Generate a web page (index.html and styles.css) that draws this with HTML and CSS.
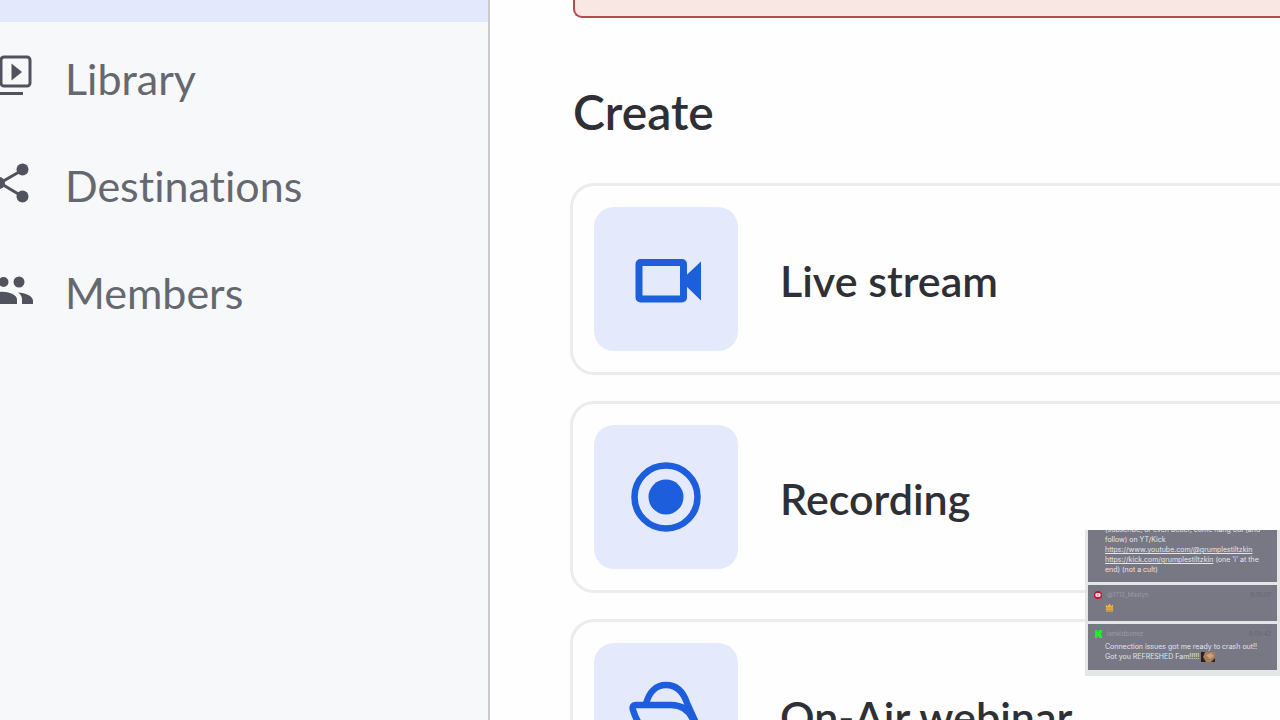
FILE: index.html
```
<!DOCTYPE html>
<html lang="en">
<head>
    <meta charset="UTF-8">
    <meta name="viewport" content="width=device-width, initial-scale=1.0">
    <title>Create</title>
    <link rel="stylesheet" href="styles.css">
</head>
<body>
    <aside class="sidebar">
        <div class="active-item"></div>
        <nav>
            <a href="#library">
                <svg class="nav-icon" viewBox="0 0 36 44" fill="none">
                    <rect x="1" y="3" width="29" height="29" rx="3" stroke="#50525d" stroke-width="3"/>
                    <path d="M11.500 9.500v17l10.500-8.500z" fill="#50525d"/>
                    <path d="M0 39.500h23" stroke="#50525d" stroke-width="3"/>
                </svg>
                <span>Library</span>
            </a>
            <a href="#destinations">
                <svg class="nav-icon" viewBox="0 0 36 44" fill="#50525d">
                    <path d="M22.500 9L0 22l22.500 13.500" fill="none" stroke="#50525d" stroke-width="3"/>
                    <circle cx="22.500" cy="8.500" r="6"/>
                    <circle cx="22.500" cy="35.500" r="6"/>
                    <circle cx="-1" cy="22" r="6"/>
                </svg>
                <span>Destinations</span>
            </a>
            <a href="#members">
                <svg class="nav-icon" viewBox="0 0 36 44" fill="#50525d">
                    <circle cx="3.500" cy="14" r="5"/>
                    <circle cx="19" cy="14" r="5.500"/>
                    <path d="M-4 25C2 22 17 25 17 31.500V36H-4z"/>
                    <path d="M18 24.500c7 .5 15 3.500 15 8V36H22v-4.500c0-3-1.500-5.500-4-7z"/>
                </svg>
                <span>Members</span>
            </a>
        </nav>
    </aside>

    <main class="content">
        <div class="alert"></div>
        <h1>Create</h1>
        <div class="cards">
            <button class="card">
                <svg class="card-icon" viewBox="0 0 144 144">
                    <rect x="45" y="55.500" width="44.500" height="36.500" rx="1.500" fill="none" stroke="#1c5edc" stroke-width="7"/>
                    <path d="M91 69.500L107 54.500v39L91 78z" fill="#1c5edc"/>
                </svg>
                <span>Live stream</span>
            </button>
            <button class="card">
                <svg class="card-icon" viewBox="0 0 144 144">
                    <circle cx="72" cy="72" r="31.500" fill="none" stroke="#1c5edc" stroke-width="6.500"/>
                    <circle cx="72" cy="72" r="17.500" fill="#1c5edc"/>
                </svg>
                <span>Recording</span>
            </button>
            <button class="card">
                <svg class="card-icon" viewBox="0 0 144 144" fill="none" stroke="#1c5edc" stroke-width="6.500">
                    <path d="M52 61C55 49 62 42 72 42s17 6 21 18l9 20 4 12"/>
                    <path d="M100 79C96 68 88 62 77 62H42c-3 0-4 2-3 5 4 13 12 24 24 32"/>
                </svg>
                <span>On-Air webinar</span>
            </button>
        </div>
    </main>

    <!-- live chat overlay -->
    <section class="chat">
        <div class="message message-first">
            <p>(subscribe, or even better, come hang out (and<br>
            follow) on YT/Kick<br>
            <a href="https://www.youtube.com/@grumplestiltzkin">https://www.youtube.com/@grumplestiltzkin</a><br>
            <a href="https://kick.com/grumplestiltzkin">https://kick.com/grumplestiltzkin</a> (one 'i' at the<br>
            end) (not a cult)</p>
        </div>
        <div class="message">
            <div class="meta">
                <svg viewBox="0 0 8 8"><circle cx="4" cy="4" r="4" fill="#c4122f"/><rect x="1.500" y="2.200" width="5" height="3.600" rx="1" fill="#fff"/><path d="M3.500 3v2l1.500-1z" fill="#c4122f"/></svg>
                <span class="name">@1713_Maxlyn</span>
                <time>8:10:07</time>
            </div>
            <p>
                <svg class="emote" viewBox="0 0 10 10"><path d="M1 1l2 2 2-3 2 3 2-2v8H1z" fill="#f4b548"/><path d="M1 5h8M1 7.500h8" stroke="#a8692c" stroke-width=".7"/></svg>
            </p>
        </div>
        <div class="message message-last">
            <div class="meta">
                <svg viewBox="0 0 8 8"><path d="M1 0h2.500v2h1V1H5V0h3v3H7v2h1v3H5V7H4.500V6h-1v2H1z" fill="#20f020"/></svg>
                <span class="name">iamkidbonez</span>
                <time>8:09:42</time>
            </div>
            <p>Connection issues got me ready to crash out!!<br>
            Got you REFRESHED Fam!!!!!
            <svg class="photo" viewBox="0 0 14 10"><rect width="14" height="10" fill="#a77c5c"/><path d="M0 0h4L2 5l3 5H0z" fill="#2b201c"/><path d="M10 10l4-4v4z" fill="#33241c"/><path d="M5 3l5-2 3 3-4 3z" fill="#c9a27c"/></svg></p>
        </div>
    </section>
</body>
</html>
```
FILE: styles.css
```
* {
    margin: 0;
    padding: 0;
    box-sizing: border-box;
}
body {
    display: flex;
    min-height: 100vh;
    overflow: hidden;
    background: #fefefe;
    font-family: Lato, sans-serif;
    font-variant-ligatures: none;
}
.sidebar {
    flex: 0 0 490px;
    background: #f6f8fa;
    border-right: 2px solid #c9cbce;
}
.active-item {
    height: 22px;
    background: #e4e8fc;
}
nav {
    display: flex;
    flex-direction: column;
    gap: 47px;
    padding-top: 26px;
}
nav a {
    display: flex;
    align-items: center;
    gap: 29px;
    height: 60px;
    color: #666870;
    font-size: 43px;
    text-decoration: none;
}
.nav-icon {
    width: 36px;
    height: 44px;
    margin-bottom: 4px;
}
.content {
    flex: 1;
    height: 100vh;
    padding-left: 80px;
    overflow: hidden;
}
.alert {
    height: 18px;
    margin-left: 3px;
    background: #f9e7e4;
    border: 2px solid #b9474f;
    border-width: 0 0 2px 2px;
    border-bottom-left-radius: 9px;
}
h1 {
    margin: 64px 0 41px 3px;
    color: #2e3035;
    font-size: 48px;
    font-weight: 600;
    line-height: 60px;
}
.cards {
    display: flex;
    flex-direction: column;
    gap: 26px;
}
.card {
    display: flex;
    align-items: center;
    gap: 42px;
    padding: 21px;
    background: #fefefe;
    border: 3px solid #ececee;
    border-right: 0;
    border-radius: 24px 0 0 24px;
    color: #2e3035;
    font-family: inherit;
    font-size: 43px;
    font-weight: 600;
    text-align: left;
}
.card span {
    padding-top: 2px;
}
.card-icon {
    flex: none;
    width: 144px;
    height: 144px;
    background: #e4e9fc;
    border-radius: 20px;
}
.chat {
    position: absolute;
    right: 0;
    bottom: 44px;
    display: flex;
    flex-direction: column;
    gap: 3px;
    width: 195px;
    padding: 0 3px 6px;
    background: rgba(226, 227, 230, 0.9);
    color: #e4e4ea;
    font-family: Inter, sans-serif;
    font-size: 7px;
    line-height: 10px;
}
.message {
    height: 36px;
    padding: 5px 6px;
    background: #777883;
}
.message-first {
    display: flex;
    align-items: flex-end;
    height: 52px;
    padding-bottom: 7px;
    overflow: hidden;
}
.message-last {
    height: 46px;
}
.message p {
    padding-left: 11px;
    white-space: nowrap;
}
.message a {
    color: inherit;
}
.meta {
    display: flex;
    align-items: center;
    gap: 5px;
    height: 10px;
    margin-bottom: 3px;
    color: #9b9ca6;
    font-size: 6px;
}
.meta svg {
    width: 8px;
    height: 8px;
}
.meta time {
    margin-left: auto;
    color: #666772;
}
.emote {
    display: block;
    width: 9px;
    height: 10px;
}
.photo {
    width: 14px;
    height: 10px;
    vertical-align: middle;
}
```
